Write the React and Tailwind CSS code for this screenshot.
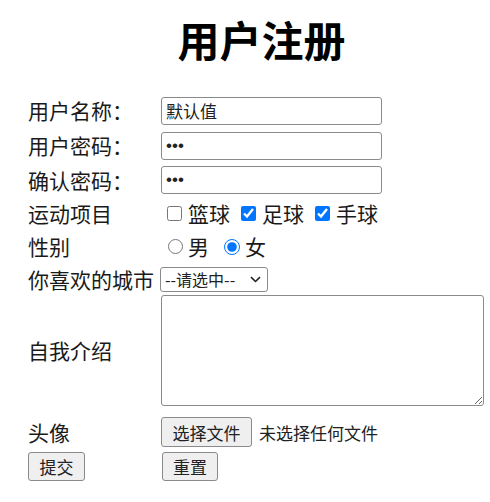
import React from "react";

const font = { fontFamily: '"Noto Sans CJK SC", "Noto Sans", sans-serif' };
const pwFont = { fontFamily: '"Liberation Sans", Arial, sans-serif' };

function Row({ h, mt = "", label, children }) {
  return (
    <div className={`flex items-center ${h} ${mt}`}>
      <div className="w-[133px] shrink-0 text-[21px] leading-none text-[#1a1a1a]">{label}</div>
      <div className="flex items-center">{children}</div>
    </div>
  );
}

const inputCls =
  "w-[221px] h-[28px] border border-[#8a8a8a] rounded-[3px] px-[4px] text-[17px] text-[#222] bg-white outline-none";

export default function App() {
  return (
    <div className="w-[490px] h-[502px] bg-white overflow-hidden" style={font}>
      <div className="h-[77px] flex items-center justify-center pl-[33px] text-[42px] font-bold text-black leading-none">
        用户注册
      </div>
      <div className="pl-[28px] mt-[16px]">
        <Row h="h-[35px]" label="用户名称：">
          <input className={inputCls} defaultValue="默认值" style={font} />
        </Row>
        <Row h="h-[35px]" label="用户密码：">
          <input type="password" className={inputCls} defaultValue="123" style={pwFont} />
        </Row>
        <Row h="h-[34px]" label="确认密码：">
          <input type="password" className={inputCls} defaultValue="123" style={pwFont} />
        </Row>
        <Row h="h-[33px]" label="运动项目">
          <div className="flex items-center text-[21px] text-[#1a1a1a] leading-none">
            <input type="checkbox" className="w-[15px] h-[15px] m-0 ml-[6px] mr-[6px] accent-[#0075ff]" />
            <span>篮球</span>
            <input type="checkbox" defaultChecked className="w-[15px] h-[15px] m-0 ml-[11px] mr-[6px] accent-[#0075ff]" />
            <span>足球</span>
            <input type="checkbox" defaultChecked className="w-[15px] h-[15px] m-0 ml-[11px] mr-[6px] accent-[#0075ff]" />
            <span>手球</span>
          </div>
        </Row>
        <Row h="h-[33px]" label="性别">
          <div className="flex items-center text-[21px] text-[#1a1a1a] leading-none">
            <input type="radio" name="sex" className="w-[15px] h-[15px] m-0 ml-[7px] mr-[5px] accent-[#0075ff]" />
            <span>男</span>
            <input type="radio" name="sex" defaultChecked className="w-[16px] h-[16px] m-0 ml-[15px] mr-[5px] accent-[#0075ff]" />
            <span>女</span>
          </div>
        </Row>
        <Row h="h-[32px]" label="你喜欢的城市">
          <div className="-ml-[1px] w-[108px] h-[25px] border border-[#8a8a8a] rounded-[3px] flex items-center justify-between pl-[4px] pr-[6px] text-[16px] text-[#222] leading-none bg-white">
            <span>--请选中--</span>
            <svg width="11" height="7" viewBox="0 0 11 7" fill="none">
              <path d="M1 1.2 L5.5 5.5 L10 1.2" stroke="#222" strokeWidth="1.6" />
            </svg>
          </div>
        </Row>
        <Row h="h-[111px]" label="自我介绍">
          <textarea className="w-[323px] h-[111px] border border-[#8a8a8a] rounded-[3px] bg-white" />
        </Row>
        <Row h="h-[30px]" mt="mt-[11px]" label="头像">
          <div className="flex items-center">
            <div className="w-[91px] h-[30px] border border-[#8a8a8a] rounded-[3px] bg-[#efefef] flex items-center justify-center text-[17px] text-[#222] leading-none">
              选择文件
            </div>
            <span className="ml-[7px] text-[17px] text-[#222] leading-none">未选择任何文件</span>
          </div>
        </Row>
        <div className="flex items-center h-[29px] mt-[5px]">
          <div className="w-[134px] shrink-0">
            <div className="w-[57px] h-[29px] border border-[#8a8a8a] rounded-[3px] bg-[#efefef] flex items-center justify-center text-[17px] text-[#222] leading-none">
              提交
            </div>
          </div>
          <div className="w-[56px] h-[29px] border border-[#8a8a8a] rounded-[3px] bg-[#efefef] flex items-center justify-center text-[17px] text-[#222] leading-none">
            重置
          </div>
        </div>
      </div>
    </div>
  );
}
